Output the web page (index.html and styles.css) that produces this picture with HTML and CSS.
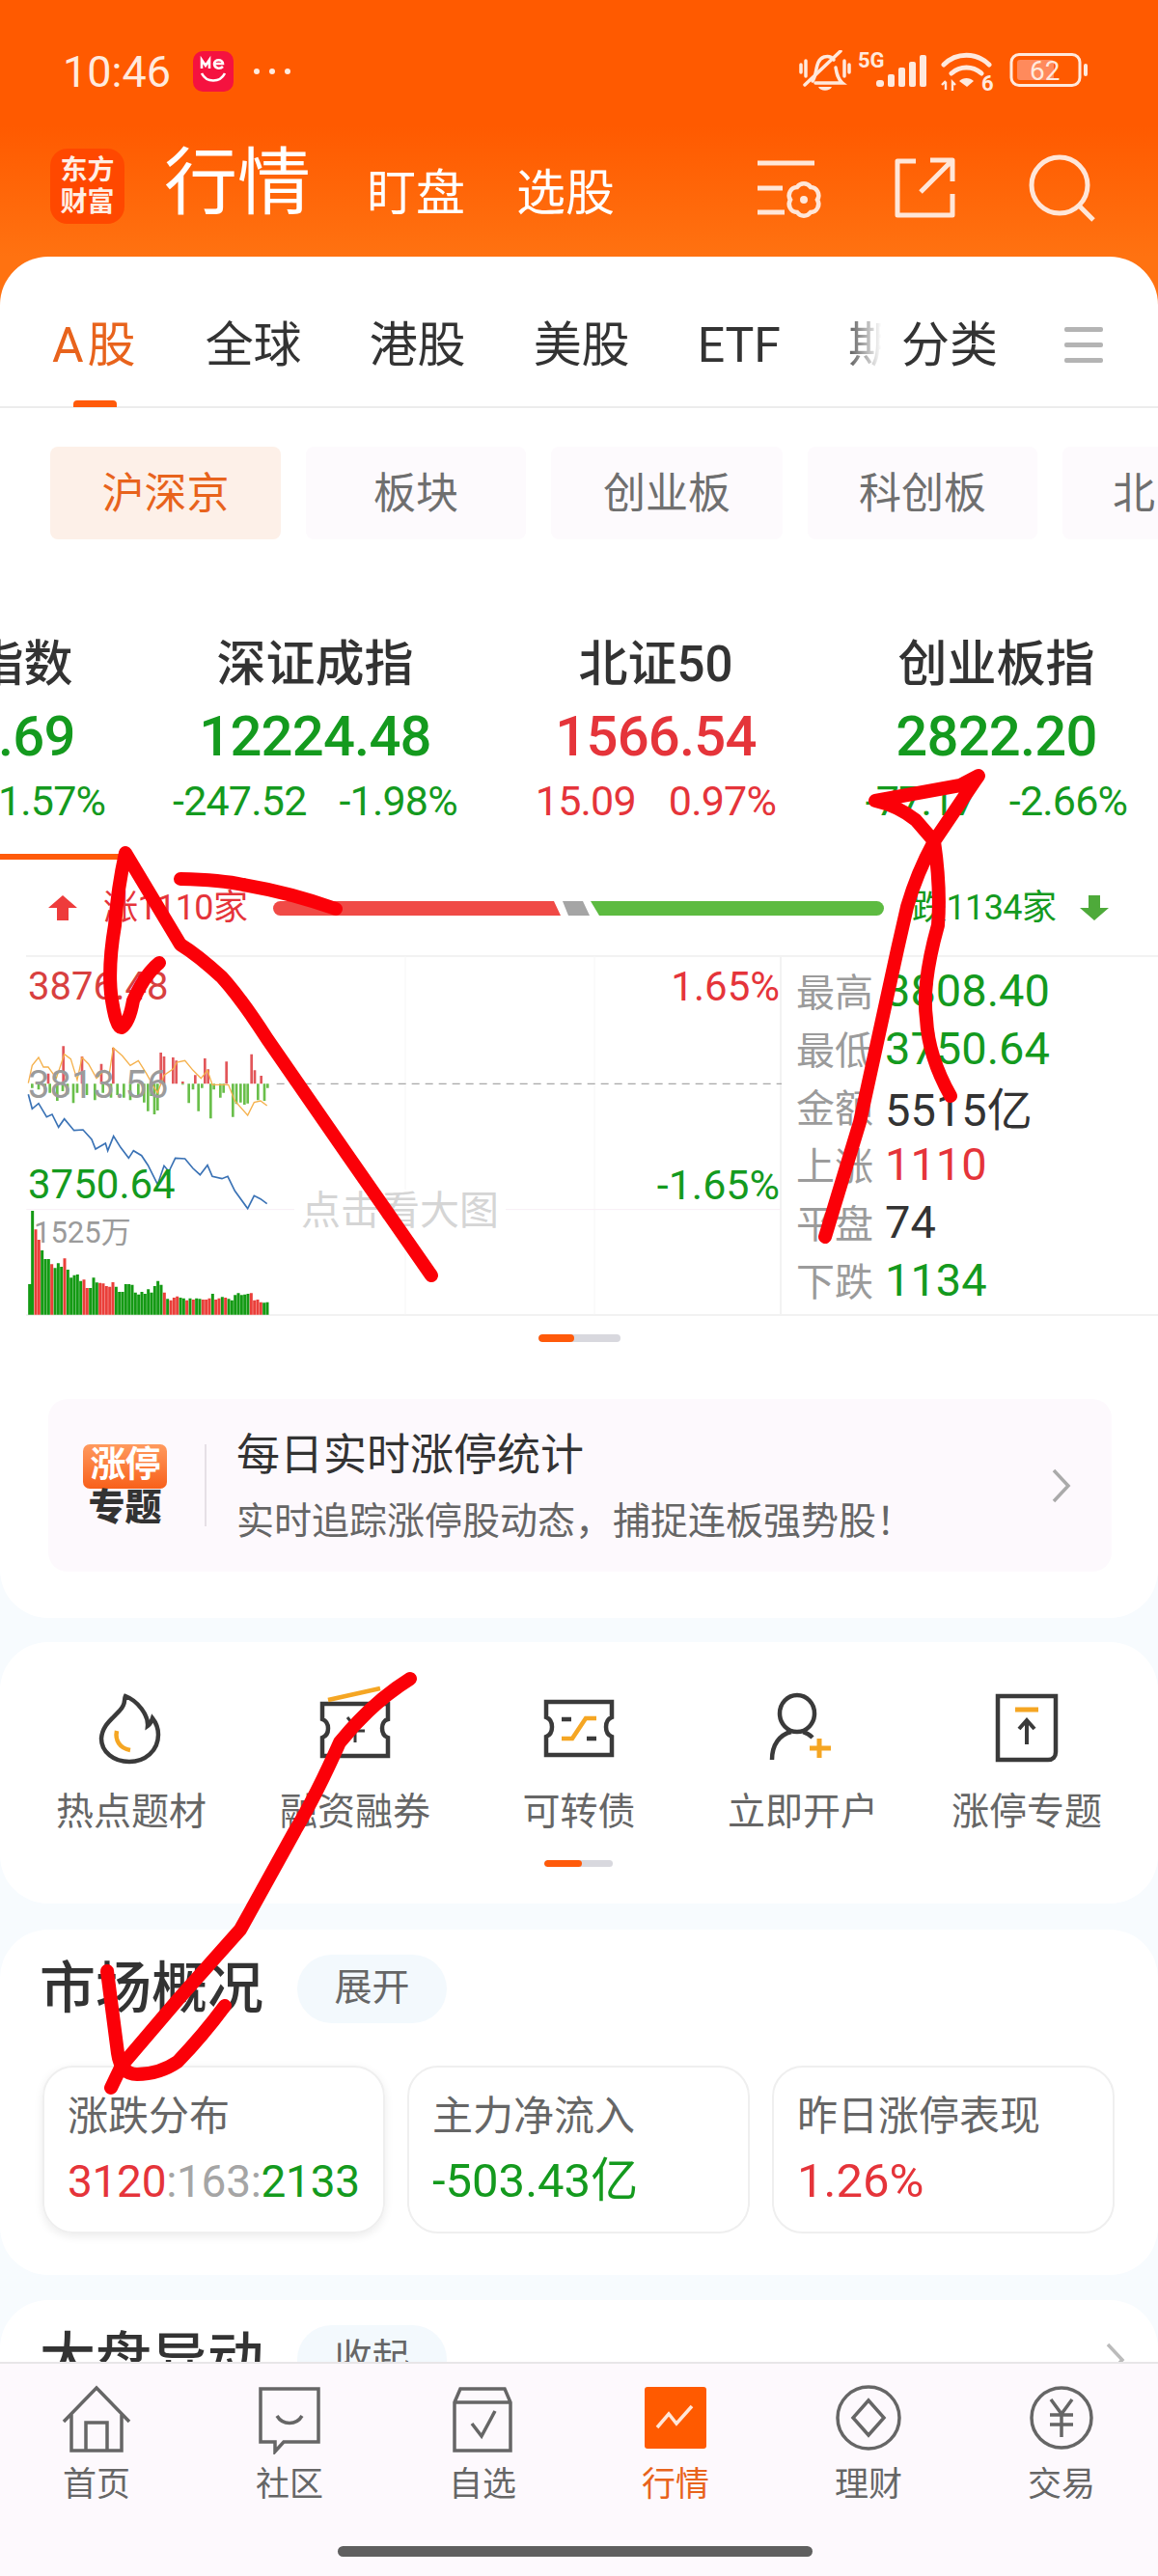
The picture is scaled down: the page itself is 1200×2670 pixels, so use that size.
FILE: index.html
```html
<!DOCTYPE html>
<html lang="zh-CN">
<head>
    <meta charset="UTF-8">
    <title>行情</title>
    <link rel="stylesheet" href="styles.css">
</head>
<body>
<div class="page">
    <div class="main">
        <!-- 顶部 -->
        <div class="header">
            <div class="status">
                <span class="time">10:46</span>
                <svg class="me" width="42" height="42" viewBox="0 0 42 42"><rect width="42" height="42" rx="10" fill="#f5123f"/><path d="M9 18V9l4 6 4-6v9M22 13h9c0-5-9-5-9 0s6 6 9 3" fill="none" stroke="#fff" stroke-width="2.6"/><path d="M9 23c5 10 19 10 24 0" fill="none" stroke="#fff" stroke-width="2.6"/></svg>
                <span class="dots"><i></i><i></i><i></i></span>
                <svg class="status-right" width="300" height="44" viewBox="828 52 300 44">
                    <g fill="none" stroke="#ffe9dd" stroke-width="3.5" stroke-linecap="round">
                        <path d="M830 67v8M835 63v16M875 63v16M880 67v8"/>
                        <path d="M834 88l37-35"/>
                        <path d="M842 84c5-5 2-22 12-25 4-1 8 0 10 3M866 70c1 6 2 12 7 16H845"/>
                    </g>
                    <path d="M848 90h14c-2 5-12 5-14 0z" fill="#ffe9dd"/>
                    <text class="mini" x="889" y="70">5G</text>
                    <g fill="#ffe9dd">
                        <rect x="908" y="83" width="8" height="7" rx="3"/><rect x="920" y="77" width="7" height="13" rx="2"/><rect x="931" y="70" width="7" height="20" rx="2"/><rect x="942" y="64" width="7" height="26" rx="2"/><rect x="953" y="57" width="7" height="33" rx="2"/>
                    </g>
                    <g fill="none" stroke="#ffe9dd" stroke-width="5" stroke-linecap="round">
                        <path d="M978 67c13-13 34-13 47 0"/>
                        <path d="M986 76c9-8 22-8 31 0"/>
                    </g>
                    <path d="M994 84c4-4 11-4 15 0l-7 6z" fill="#ffe9dd"/>
                    <path d="M980 85v8M976 88l4-4M987 94v-9l3 3" fill="none" stroke="#ffe9dd" stroke-width="2.4"/>
                    <text class="mini" x="1017" y="94">6</text>
                    <rect x="1048" y="56.5" width="71" height="32" rx="8" fill="none" stroke="#ffe9dd" stroke-width="3"/>
                    <rect x="1054" y="62" width="38" height="21" rx="3" fill="#ff8a5c"/>
                    <text class="batt" x="1067" y="83">62</text>
                    <rect x="1123" y="66" width="4" height="13" rx="2" fill="#ffe9dd"/>
                </svg>
            </div>
            <div class="titlebar">
                <div class="logo">东方<br>财富</div>
                <span class="title">行情</span>
                <span class="subtitle first">盯盘</span>
                <span class="subtitle">选股</span>
                <svg class="bar-icons" width="350" height="70" viewBox="785 158 350 70">
                    <g fill="none" stroke="#ffe6d8" stroke-width="5">
                        <path d="M785 167h59M785 193h26M785 218h28"/>
                        <path d="M847 205A8.500 8.500 0 0 1 840 218A8.500 8.500 0 0 1 826 218A8.500 8.500 0 0 1 819 205A8.500 8.500 0 0 1 826 192A8.500 8.500 0 0 1 840 192A8.500 8.500 0 0 1 847 205z" stroke-width="4.500"/>
                        <circle cx="833" cy="205" r="3" fill="#ffe6d8" stroke-width="2"/>
                        <path d="M949 165h-19v56h57v-22M954 197l33-33M964 164h23v22" stroke-linejoin="round"/>
                        <circle cx="1098" cy="190" r="29"/>
                        <path d="M1118 211l15 15"/>
                    </g>
                </svg>
            </div>
        </div>

        <!-- 指数卡片 -->
        <div class="card market-card">
            <div class="tabs">
                <div class="tab-scroll">
                    <span class="tab on">A股</span>
                    <span class="tab">全球</span>
                    <span class="tab">港股</span>
                    <span class="tab">美股</span>
                    <span class="tab">ETF</span>
                    <span class="tab">期货</span>
                    <i class="tab-fade"></i>
                </div>
                <span class="tab tab-fixed">分类</span>
                <span class="tab-menu"><i></i><i></i><i></i></span>
                <i class="tab-bar"></i>
            </div>
            <div class="chips">
                <span class="chip on w1">沪深京</span>
                <span class="chip w2">板块</span>
                <span class="chip w3">创业板</span>
                <span class="chip w4">科创板</span>
                <span class="chip w5">北</span>
            </div>
            <div class="indexes">
                <div class="index green">
                    <div class="index-name">上证指数</div>
                    <div class="index-val">3753.69</div>
                    <div class="index-chg"><span>-59.87</span><span>-1.57%</span></div>
                </div>
                <div class="index green">
                    <div class="index-name">深证成指</div>
                    <div class="index-val">12224.48</div>
                    <div class="index-chg"><span>-247.52</span><span>-1.98%</span></div>
                </div>
                <div class="index red">
                    <div class="index-name">北证50</div>
                    <div class="index-val">1566.54</div>
                    <div class="index-chg"><span>15.09</span><span>0.97%</span></div>
                </div>
                <div class="index green">
                    <div class="index-name">创业板指</div>
                    <div class="index-val">2822.20</div>
                    <div class="index-chg"><span>-77.17</span><span>-2.66%</span></div>
                </div>
            </div>
            <div class="index-line"></div>
            <div class="breadth">
                <svg width="30" height="26" viewBox="0 0 30 26"><path d="M15 0l15 13h-9v13H9V13H0z" fill="#ee3b3b"/></svg>
                <span class="breadth-up">涨1110家</span>
                <svg width="633" height="15" viewBox="0 0 633 15">
                    <path d="M7.500 0H291L298 15H7.500A7.500 7.500 0 0 1 7.500 0z" fill="#f04a46"/>
                    <path d="M300 0H321L328 15H306z" fill="#a5a5a5"/>
                    <path d="M329 0H625.500A7.500 7.500 0 0 1 625.500 15H338z" fill="#5dbb41"/>
                </svg>
                <span class="breadth-down">跌1134家</span>
                <svg width="30" height="26" viewBox="0 0 30 26"><path d="M15 26L0 13h9V0h12v13h9z" fill="#4eaa3a"/></svg>
            </div>
            <div class="market">
                <div class="chart">
                    <svg class="chart-svg" width="810" height="400" viewBox="0 0 2430 1200">
                        <path d="M1260 30V1145M1848 30V1145" stroke="#f6f6f6" stroke-width="3" fill="none"/>
                        <path d="M860 427H2430" stroke="#a8a8a8" stroke-width="4" stroke-dasharray="24 18" fill="none"/>
                        <path d="M82 818H925M1560 818H2430" stroke="#f8eef5" stroke-width="3" fill="none"/>
                        <g fill="none" stroke-width="8">
                            <path stroke="#e2565a" d="M150 427V395M197 427V310M255 427V342M315 427V365M352 427V315M500 427V330M510 427V342M538 427V345M548 427V355M568 427V420M607 427V400M637 427V348M647 427V382M704 427V358M782 427V335M792 427V385M812 427V402"/>
                            <path stroke="#6abf4b" d="M100 427V440M120 427V445M140 427V445M155 427V455M178 427V480M195 427V450M210 427V460M228 427V487M240 427V455M270 427V462M295 427V478M320 427V455M345 427V470M365 427V462M385 427V470M405 427V478M430 427V465M448 427V485M460 427V512M470 427V465M480 427V522M490 427V510M568 427V430M587 427V487M600 427V445M617 427V512M628 427V440M655 427V535M665 427V445M685 427V470M695 427V455M724 427V530M735 427V490M748 427V485M760 427V492M770 427V488M802 427V478M822 427V480M832 427V440"/>
                        </g>
                        <polyline fill="none" stroke="#f5b14c" stroke-width="4" points="88,425 100,370 120,345 135,375 150,375 175,410 200,335 220,350 240,415 255,345 275,365 300,410 325,385 340,395 352,315 380,340 405,370 430,355 455,395 480,440 490,455 510,400 540,380 550,360 575,355 600,385 625,410 645,385 660,430 680,430 710,430 730,480 770,525 790,485 810,480 830,495"/>
                        <polyline fill="none" stroke="#3a72b5" stroke-width="5" points="88,460 100,505 120,488 145,530 162,522 182,562 200,536 230,572 258,570 285,600 297,630 328,612 335,635 353,590 375,625 400,658 415,635 440,650 460,680 490,740 510,682 525,700 545,658 575,660 600,690 622,710 645,680 660,715 690,722 708,715 730,760 770,815 790,775 810,785 830,800"/>
                        <g fill="none" stroke-width="9">
                            <path stroke="#149a14" d="M92 1145V1050M101 1145V822M131 1145V945M141 1145V972M151 1145V972M171 1145V1000M181 1145V985M191 1145V996M211 1145V1005M221 1145V1030M231 1145V1022M241 1145V1020M251 1145V1040M281 1145V1062M291 1145V1030M301 1145V1045M361 1145V1058M371 1145V1074M381 1145V1074M391 1145V1050M401 1145V1050M411 1145V1052M421 1145V1076M431 1145V1082M441 1145V1074M451 1145V1080M461 1145V1066M471 1145V1076M481 1145V1056M491 1145V1040M501 1145V1052M521 1145V1096M561 1145V1092M571 1145V1094M591 1145V1094M611 1145V1094M621 1145V1096M661 1145V1080M691 1145V1090M711 1145V1096M721 1145V1100M731 1145V1084M741 1145V1078M751 1145V1084M761 1145V1082M771 1145V1080M821 1145V1108M831 1145V1106"/>
                            <path stroke="#ea3f3a" d="M111 1145V880M121 1145V912M161 1145V988M201 1145V970M261 1145V1036M271 1145V1062M311 1145V1046M321 1145V1048M331 1145V1056M341 1145V1058M351 1145V1044M511 1145V1076M531 1145V1100M541 1145V1092M551 1145V1088M581 1145V1100M601 1145V1098M631 1145V1098M641 1145V1098M651 1145V1094M671 1145V1098M681 1145V1094M701 1145V1092M781 1145V1078M791 1145V1100M801 1145V1098M811 1145V1106"/>
                        </g>
                    </svg>
                    <span class="lbl lbl-high">3876.48</span>
                    <span class="lbl lbl-pre">3813.56</span>
                    <span class="lbl lbl-low">3750.64</span>
                    <span class="lbl lbl-up">1.65%</span>
                    <span class="lbl lbl-down">-1.65%</span>
                    <span class="lbl lbl-vol">1525万</span>
                    <span class="lbl lbl-tip">点击看大图</span>
                </div>
                <div class="quote">
                    <div class="quote-row"><label>最高</label><span class="c-green">3808.40</span></div>
                    <div class="quote-row"><label>最低</label><span class="c-green">3750.64</span></div>
                    <div class="quote-row"><label>金额</label><span class="c-dark">5515亿</span></div>
                    <div class="quote-row"><label>上涨</label><span class="c-red">1110</span></div>
                    <div class="quote-row"><label>平盘</label><span class="c-dark">74</span></div>
                    <div class="quote-row"><label>下跌</label><span class="c-green">1134</span></div>
                </div>
            </div>
            <div class="pager market-pager"><i></i></div>
            <div class="banner">
                <div class="banner-logo">
                    <span class="banner-tag">涨停</span>
                    <span class="banner-sub">专题</span>
                </div>
                <div class="banner-text">
                    <div class="banner-title">每日实时涨停统计</div>
                    <div class="banner-desc">实时追踪涨停股动态，捕捉连板强势股！</div>
                </div>
                <svg class="banner-arrow" width="22" height="36" viewBox="0 0 22 36"><path d="M3 2l15 16L3 34" fill="none" stroke="#aaa" stroke-width="3.500"/></svg>
            </div>
        </div>

        <!-- 功能入口 -->
        <div class="card entry-card">
            <div class="entries">
                <div class="entry">
                    <svg width="72" height="72" viewBox="0 0 72 72"><path d="M30 2c-2 4 1 8-6 15C16 26 6 32 5 46c0 14 13 24 29 24s30-11 30-28c0-7-2-12-6-17-1 3-2 6-5 8 1-11-10-26-23-31z" fill="none" stroke="#3a3a3a" stroke-width="4.500"/><path d="M21 38c-2 10 3 18 14 20" fill="none" stroke="#f5a623" stroke-width="4.500"/></svg>
                    <span>热点题材</span>
                </div>
                <div class="entry">
                    <svg width="72" height="72" viewBox="0 0 72 72"><path d="M2 10h68v16c-8 2-8 16 0 19v19H2V45c8-3 8-16 0-19z" fill="none" stroke="#3a3a3a" stroke-width="4.500"/><path d="M8 6L62-6" stroke="#f5a623" stroke-width="4.500" fill="none"/><path d="M28 24l8 10 8-10M26 38h20M36 34v16" fill="none" stroke="#3a3a3a" stroke-width="3"/></svg>
                    <span>融资融券</span>
                </div>
                <div class="entry">
                    <svg width="72" height="72" viewBox="0 0 72 72"><path d="M2 8h68v16c-8 3-8 17 0 20v19H2V44c8-3 8-17 0-20z" fill="none" stroke="#3a3a3a" stroke-width="4.500"/><path d="M18 46h11l14-21h11" fill="none" stroke="#f5a623" stroke-width="4.500"/><path d="M18 26h10M44 46h10" stroke="#3a3a3a" stroke-width="4.500" fill="none"/></svg>
                    <span>可转债</span>
                </div>
                <div class="entry">
                    <svg width="72" height="72" viewBox="0 0 72 72"><ellipse cx="30" cy="20" rx="18" ry="19" fill="none" stroke="#3a3a3a" stroke-width="4.500"/><path d="M4 68c0-16 8-26 20-29M36 39c4 1 7 3 10 6" fill="none" stroke="#3a3a3a" stroke-width="4.500"/><path d="M53 46v20M43 56h22" stroke="#f5a623" stroke-width="5" fill="none"/></svg>
                    <span>立即开户</span>
                </div>
                <div class="entry">
                    <svg width="72" height="72" viewBox="0 0 72 72"><path d="M6 2h60v58c0 5-3 8-8 8H6z" fill="none" stroke="#3a3a3a" stroke-width="4.500"/><path d="M24 16h24" stroke="#f5a623" stroke-width="5" fill="none"/><path d="M36 52V28M28 36l8-9 8 9" fill="none" stroke="#3a3a3a" stroke-width="4"/></svg>
                    <span>涨停专题</span>
                </div>
            </div>
            <div class="pager entry-pager"><i></i></div>
        </div>

        <!-- 市场概况 -->
        <div class="card overview-card">
            <div class="section-head">
                <span class="section-title">市场概况</span>
                <span class="pill">展开</span>
            </div>
            <div class="stats">
                <div class="stat active">
                    <div class="stat-name">涨跌分布</div>
                    <div class="stat-val narrow"><em class="c-red">3120</em><em class="c-grey">:163:</em><em class="c-green">2133</em></div>
                </div>
                <div class="stat">
                    <div class="stat-name">主力净流入</div>
                    <div class="stat-val c-green">-503.43亿</div>
                </div>
                <div class="stat">
                    <div class="stat-name">昨日涨停表现</div>
                    <div class="stat-val c-red">1.26%</div>
                </div>
            </div>
        </div>

        <div class="card move-card">
            <div class="section-head">
                <span class="section-title">大盘异动</span>
                <span class="pill">收起</span>
                <svg class="move-arrow" width="22" height="36" viewBox="0 0 22 36"><path d="M3 2l15 16L3 34" fill="none" stroke="#bbb" stroke-width="3.500"/></svg>
            </div>
        </div>
    </div>

    <!-- 底部导航 -->
    <div class="nav">
        <div class="nav-items">
            <div class="nav-item">
                <svg width="72" height="72" viewBox="0 0 72 72"><path d="M2 38L36 3l34 35M10 30v38h52V30M25 68V39h22v29" fill="none" stroke="#666" stroke-width="3.500"/></svg>
                <span>首页</span>
            </div>
            <div class="nav-item">
                <svg width="72" height="72" viewBox="0 0 72 72"><path d="M6 4h60v55H30l-9 10v-10H6z" fill="none" stroke="#666" stroke-width="3.500"/><path d="M23 32c6 10 20 10 26 0" fill="none" stroke="#666" stroke-width="3.500"/></svg>
                <span>社区</span>
            </div>
            <div class="nav-item">
                <svg width="72" height="72" viewBox="0 0 72 72"><path d="M7 18l6-14h46l6 14v50H7zM7 18h58" fill="none" stroke="#666" stroke-width="3.500"/><path d="M25 40l10 13 14-26" fill="none" stroke="#666" stroke-width="3.500"/></svg>
                <span>自选</span>
            </div>
            <div class="nav-item on">
                <svg width="72" height="72" viewBox="0 0 72 72"><rect x="4" y="2" width="64" height="64" rx="3" fill="#ff5a00"/><path d="M17 44l12-14 8 10 16-18" fill="none" stroke="#ffe6d8" stroke-width="3.500"/></svg>
                <span>行情</span>
            </div>
            <div class="nav-item">
                <svg width="72" height="72" viewBox="0 0 72 72"><circle cx="36" cy="34" r="32" fill="none" stroke="#666" stroke-width="3.500"/><path d="M36 16l16 18-16 18-16-18z" fill="none" stroke="#666" stroke-width="3.500"/></svg>
                <span>理财</span>
            </div>
            <div class="nav-item">
                <svg width="72" height="72" viewBox="0 0 72 72"><circle cx="36" cy="34" r="31" fill="none" stroke="#666" stroke-width="3.500"/><path d="M25 15l11 15 11-15M24 31h24M24 41h24M36 30v24" fill="none" stroke="#666" stroke-width="3.500"/></svg>
                <span>交易</span>
            </div>
        </div>
        <div class="home-bar"></div>
    </div>

    <!-- 手写红色标注 -->
    <svg class="scribble" width="1200" height="2670" viewBox="0 0 1200 2670">
        <g fill="none" stroke="#fb0008" stroke-width="14" stroke-linecap="round" stroke-linejoin="round">
            <path d="M447 1322L360 1197L277 1077Q250 1035 230 1013Q205 990 187 979L130 884Q122 920 119 959Q112 1000 115 1030Q120 1066 126 1065Q134 1060 138 1037Q150 1010 165 998"/>
            <path d="M187 911Q230 912 252 917Q300 925 348 942"/>
            <path d="M855 1282L891 1163L930 984L940 940Q950 905 968 872L1014 804L995 814L907 830Q930 835 949 850L968 872Q975 920 972 959Q955 1020 960 1056Q962 1095 985 1136"/>
            <path d="M425 1740Q385 1765 352 1806Q328 1860 306 1897L249 2000L184 2073L126 2141L115 2164"/>
            <path d="M111 2043L122 2128Q125 2150 142 2150Q165 2150 184 2137Q210 2110 233 2079"/>
        </g>
    </svg>
</div>
</body>
</html>
```

FILE: styles.css
```css
*{
    margin: 0;
    padding: 0;
    box-sizing: border-box;
}
body{
    font-family: Roboto, "Noto Sans CJK SC", sans-serif;
    background: #f7fbfe;
}
i, em{
    font-style: normal;
}
.page{
    width: 1200px;
    height: 2670px;
    position: relative;
    overflow: hidden;
    background: #f7fbfe;
}
.main{
    height: 2448px;
    overflow: hidden;
}
.c-red{ color: #e5343a; }
.c-green{ color: #149a1e; }
.c-dark{ color: #333; }
.c-grey{ color: #a5a5a5; }

/* header */
.header{
    height: 320px;
    margin-bottom: -54px;
    background: linear-gradient(#ff5a00 0, #ff5a00 130px, #ff7211 266px);
    padding-top: 52px;
}
.status{
    display: flex;
    align-items: center;
    height: 44px;
    padding-left: 65px;
}
.time{
    font-size: 45px;
    color: #ffeade;
    width: 135px;
}
.dots{
    display: flex;
    gap: 10px;
    margin-left: 21px;
}
.dots i{
    width: 6px;
    height: 6px;
    border-radius: 50%;
    background: #ffeade;
}
.status-right{
    margin-left: auto;
    margin-right: 72px;
}
.mini{
    font-size: 22px;
    font-weight: 700;
    fill: #ffe9dd;
    font-family: Roboto, sans-serif;
}
.batt{
    font-size: 28px;
    fill: #ffe9dd;
    font-family: Roboto, sans-serif;
}
.titlebar{
    display: flex;
    align-items: flex-end;
    margin-top: 58px;
    height: 78px;
    padding-left: 52px;
    position: relative;
}
.logo{
    width: 77px;
    height: 78px;
    border-radius: 18px;
    background: #ff4800;
    color: #ffeee4;
    font-size: 28px;
    line-height: 33px;
    font-weight: 700;
    text-align: center;
    padding-top: 6px;
}
.title{
    font-size: 76px;
    line-height: 84px;
    color: #fff;
    margin-left: 41px;
}
.subtitle{
    font-size: 51px;
    line-height: 62px;
    color: #fff;
    margin-left: 53px;
}
.subtitle.first{
    margin-left: 58px;
}
.bar-icons{
    margin-left: auto;
    margin-right: 65px;
    margin-bottom: 2px;
}

/* card */
.card{
    background: #fff;
    border-radius: 50px;
    position: relative;
}
.market-card{
    height: 1411px;
}
.tabs{
    display: flex;
    align-items: center;
    height: 157px;
    padding-top: 28px;
    border-bottom: 2px solid #ececec;
    position: relative;
}
.tab-scroll{
    display: flex;
    gap: 70px;
    width: 930px;
    padding-left: 54px;
    overflow: hidden;
    position: relative;
    flex: none;
}
.tab{
    font-size: 50px;
    line-height: 64px;
    color: #333;
    white-space: nowrap;
    position: relative;
    flex: none;
}
.tab.on{
    color: #e8631c;
    letter-spacing: 4px;
    margin-right: -2px;
}
.tab-bar{
    position: absolute;
    left: 76px;
    bottom: -1px;
    width: 45px;
    height: 7px;
    border-radius: 4px 4px 0 0;
    background: #ff5a0a;
}
.tab-fade{
    position: absolute;
    right: 0;
    top: 0;
    width: 55px;
    height: 100%;
    background: linear-gradient(to right, rgba(255,255,255,0.1), #fff 70%);
}
.tab-fixed{
    margin-left: 4px;
}
.tab-menu{
    display: flex;
    flex-direction: column;
    gap: 11px;
    margin-left: 69px;
}
.tab-menu i{
    width: 40px;
    height: 5px;
    background: #b4b4b4;
    border-radius: 2px;
}

/* chips */
.chips{
    display: flex;
    gap: 26px;
    margin-top: 40px;
    padding-left: 52px;
    overflow: hidden;
}
.chip{
    flex: none;
    height: 96px;
    line-height: 98px;
    border-radius: 8px;
    background: #fdfafd;
    color: #6f6f6f;
    font-size: 44px;
    text-align: center;
}
.chip.on{
    background: #fdf0e8;
    color: #e8631c;
}
.w1{ width: 239px; }
.w2{ width: 228px; }
.w3{ width: 240px; }
.w4{ width: 238px; }
.w5{ width: 200px; padding-left: 52px; text-align: left; }

/* indexes */
.indexes{
    display: flex;
    margin-top: 100px;
    margin-left: -203px;
    width: 1412px;
}
.index{
    width: 353px;
    text-align: center;
    flex: none;
}
.index-name{
    font-size: 51px;
    line-height: 60px;
    font-weight: 500;
    color: #333;
}
.index-val{
    font-size: 58px;
    line-height: 60px;
    font-weight: 500;
    letter-spacing: -0.8px;
    margin-top: 14px;
}
.index-chg{
    display: flex;
    justify-content: center;
    gap: 34px;
    font-size: 43px;
    line-height: 44px;
    letter-spacing: -0.8px;
    margin-top: 15px;
}
.index.green .index-val, .index.green .index-chg{ color: #149a1e; }
.index.red .index-val, .index.red .index-chg{ color: #e5343a; }
.index-line{
    width: 133px;
    height: 6px;
    margin-top: 33px;
    background: #ff5a0a;
}
.breadth{
    display: flex;
    align-items: center;
    height: 34px;
    margin-top: 33px;
    padding-left: 50px;
}
.breadth-up, .breadth-down{
    font-size: 36px;
    line-height: 34px;
    letter-spacing: -0.6px;
    white-space: nowrap;
}
.breadth-up{
    color: #e5343a;
    width: 176px;
    margin-left: 27px;
}
.breadth-down{
    color: #149a1e;
    width: 174px;
    margin-left: 29px;
}

/* chart */
.market{
    display: flex;
    height: 374px;
    margin-top: 32px;
    margin-left: 27px;
    border-top: 2px solid #f2f2f2;
    border-bottom: 2px solid #f2f2f2;
}
.chart{
    width: 783px;
    position: relative;
    border-right: 2px solid #f2f2f2;
    flex: none;
}
.chart-svg{
    position: absolute;
    left: -27px;
    top: -11px;
    overflow: hidden;
}
.lbl{
    position: absolute;
    font-size: 40px;
    line-height: 44px;
    white-space: nowrap;
}
.lbl-high{ left: 2px; top: 9px; color: #d8403f; }
.lbl-pre{ left: 2px; top: 111px; color: #9b9b9b; }
.lbl-low{ left: 2px; top: 214px; color: #149a1e; font-size: 42px; }
.lbl-up{ right: 0; top: 9px; color: #e5343a; font-size: 42px; }
.lbl-down{ right: 0; top: 214px; color: #149a1e; font-size: 43px; }
.lbl-vol{ left: 8px; top: 266px; font-size: 31px; line-height: 40px; color: #9b9b9b; }
.lbl-tip{ left: 278px; top: 241px; font-size: 41px; color: #d5d5d5; background: #fff; padding: 0 7px; }
.quote{
    padding: 4px 0 0 15px;
}
.quote-row{
    display: flex;
    align-items: center;
    height: 60px;
}
.quote-row label{
    font-size: 40px;
    color: #9b9b9b;
    width: 92px;
}
.quote-row span{
    font-size: 47px;
}

/* pagers */
.pager{
    background: #d8d8de;
    border-radius: 4px;
    overflow: hidden;
}
.pager i{
    display: block;
    height: 100%;
    background: #ff5a0a;
    border-radius: 4px;
}
.market-pager{
    width: 85px;
    height: 8px;
    margin: 19px 0 0 558px;
}
.market-pager i{
    width: 37px;
}

/* banner */
.banner{
    display: flex;
    align-items: center;
    height: 179px;
    margin: 59px 48px 0 50px;
    background: #fdf9fd;
    border-radius: 20px;
    padding-left: 36px;
}
.banner-logo{
    width: 128px;
    height: 85px;
    border-right: 2px solid #e6e0e6;
    display: flex;
    flex-direction: column;
    align-items: flex-start;
    flex: none;
}
.banner-tag{
    width: 87px;
    height: 46px;
    border-radius: 7px;
    background: linear-gradient(#ff9a5e, #f8601a);
    color: #fff;
    font-size: 37px;
    line-height: 44px;
    font-weight: 700;
    text-align: center;
    letter-spacing: -1px;
    white-space: nowrap;
}
.banner-sub{
    width: 87px;
    color: #333;
    font-size: 38px;
    line-height: 38px;
    font-weight: 900;
    text-align: center;
    white-space: nowrap;
}
.banner-text{
    margin-left: 31px;
    padding-top: 3px;
}
.banner-title{
    font-size: 45px;
    line-height: 54px;
    color: #333;
}
.banner-desc{
    font-size: 39px;
    line-height: 48px;
    color: #666;
    margin-top: 17px;
    white-space: nowrap;
}
.banner-arrow{
    margin-left: auto;
    margin-right: 41px;
}

/* entries */
.entry-card{
    height: 271px;
    margin-top: 25px;
    padding-top: 54px;
}
.entries{
    display: flex;
    padding-left: 20px;
}
.entry{
    width: 232px;
    text-align: center;
    flex: none;
}
.entry svg{
    display: block;
    margin: 0 auto;
    overflow: visible;
}
.entry span{
    display: block;
    font-size: 39px;
    line-height: 50px;
    color: #666;
    margin-top: 25px;
    white-space: nowrap;
}
.entry-pager{
    width: 71px;
    height: 7px;
    margin: 25px 0 0 564px;
}
.entry-pager i{
    width: 39px;
}

/* overview */
.overview-card{
    height: 358px;
    margin-top: 27px;
    padding-top: 26px;
}
.section-head{
    display: flex;
    align-items: center;
    height: 71px;
    padding-left: 41px;
}
.section-title{
    font-size: 58px;
    line-height: 71px;
    color: #333;
    font-weight: 500;
}
.pill{
    width: 155px;
    height: 71px;
    margin-left: 35px;
    border-radius: 36px;
    background: #f3f9fd;
    color: #666;
    font-size: 39px;
    line-height: 69px;
    text-align: center;
}
.stats{
    display: flex;
    gap: 23px;
    margin: 44px 45px 0 44px;
}
.stat{
    flex: 1;
    height: 174px;
    border: 2px solid #efefef;
    border-radius: 32px;
    padding: 26px 0 0 24px;
}
.stat.active{
    box-shadow: 0 3px 10px rgba(0,0,0,0.08);
}
.stat-name{
    font-size: 42px;
    line-height: 50px;
    color: #666;
}
.stat-val{
    font-size: 49px;
    line-height: 50px;
    margin-top: 17px;
    white-space: nowrap;
}
.stat-val.narrow{
    font-size: 46px;
    letter-spacing: -0.3px;
}
.move-card{
    height: 200px;
    margin-top: 26px;
    padding-top: 26px;
}
.move-arrow{
    margin-left: auto;
    margin-right: 33px;
}

/* bottom nav */
.nav{
    height: 222px;
    background: #fdf9fd;
    border-top: 2px solid #e8e6e8;
    padding-top: 22px;
}
.nav-items{
    display: flex;
}
.nav-item{
    width: 200px;
    text-align: center;
    color: #666;
}
.nav-item svg{
    display: block;
    margin: 0 auto;
}
.nav-item span{
    display: block;
    font-size: 35px;
    line-height: 40px;
    margin-top: 12px;
}
.nav-item.on span{
    color: #e8631c;
}
.home-bar{
    width: 492px;
    height: 11px;
    margin: 43px 0 0 350px;
    border-radius: 6px;
    background: #5f5f5f;
}

/* annotations */
.scribble{
    position: absolute;
    left: 0;
    top: 0;
    pointer-events: none;
}
```
